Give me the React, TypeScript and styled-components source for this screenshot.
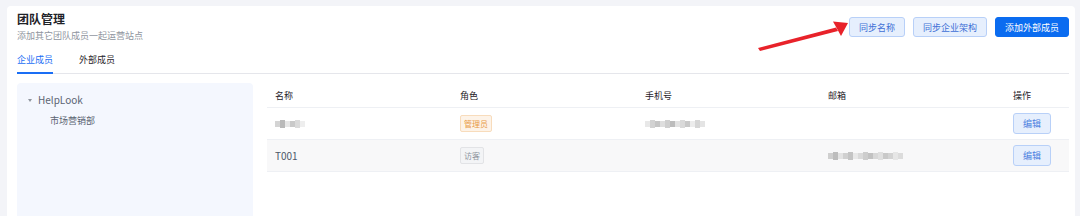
import React from 'react';
import styled, { createGlobalStyle } from 'styled-components';

const GlobalStyle = createGlobalStyle`
    html, body {
        margin: 0;
        padding: 0;
        background: #f3f4f8;
        font-family: "Noto Sans CJK SC", "Noto Sans", sans-serif;
    }
`;

const members = [
    { name: null, role: 'admin', phone: true, email: false },
    { name: 'T001', role: 'guest', phone: false, email: true },
];

const blurShades = {
    name: ['#d4d4d4', '#b9b9b9', '#e6e6e6', '#c9c9c9', '#dadada', '#eeeeee'],
    phone: ['#e8e8e8', '#d2d2d2', '#c5c5c5', '#dedede', '#cfcfcf', '#bcbcbc', '#e2e2e2', '#d9d9d9', '#c8c8c8', '#ececec', '#d6d6d6', '#e4e4e4'],
    email: ['#cfcfcf', '#bdbdbd', '#e3e3e3', '#d0d0d0', '#c4c4c4', '#e8e8e8', '#dadada', '#cdcdcd', '#c2c2c2', '#d8d8d8', '#e0e0e0', '#c9c9c9', '#d3d3d3', '#e6e6e6', '#dcdcdc'],
};

function Blurred({ shades }: { shades: string[] }) {
    return (
        <BlurRow>
            {shades.map((c, i) => (
                <BlurCell key={i} style={{ background: c, height: i % 3 === 1 ? 8 : 6 }} />
            ))}
        </BlurRow>
    );
}

function Arrow() {
    return (
        <ArrowSvg width="94" height="34" viewBox="0 0 94 34">
            <path d="M1 28 L79 7.5 L81 11 L3 31 Z" fill="#e8222a" />
            <path d="M91 3 L76 1.5 L84 16 Z" fill="#e8222a" />
        </ArrowSvg>
    );
}

export default function App() {
    return (
        <>
            <GlobalStyle />
            <Page>
                <Card>
                    <Header>
                        <div>
                            <Title>团队管理</Title>
                            <Subtitle>添加其它团队成员一起运营站点</Subtitle>
                        </div>
                        <Actions>
                            <Arrow />
                            <Button>同步名称</Button>
                            <Button>同步企业架构</Button>
                            <Button $primary>添加外部成员</Button>
                        </Actions>
                    </Header>
                    <Tabs>
                        <Tab $active>企业成员</Tab>
                        <Tab>外部成员</Tab>
                    </Tabs>
                    <Body>
                        <Tree>
                            <TreeRoot>
                                <Caret />
                                HelpLook
                            </TreeRoot>
                            <TreeChild>市场营销部</TreeChild>
                        </Tree>
                        <Table>
                            <HeadRow>
                                <Cell>名称</Cell>
                                <Cell>角色</Cell>
                                <Cell>手机号</Cell>
                                <Cell>邮箱</Cell>
                                <Cell>操作</Cell>
                            </HeadRow>
                            {members.map((m, i) => (
                                <Row key={i} $striped={i % 2 === 1}>
                                    <Cell>{m.name ?? <Blurred shades={blurShades.name} />}</Cell>
                                    <Cell>
                                        {m.role === 'admin' ? <Tag $kind="admin">管理员</Tag> : <Tag $kind="guest">访客</Tag>}
                                    </Cell>
                                    <Cell>{m.phone && <Blurred shades={blurShades.phone} />}</Cell>
                                    <Cell>{m.email && <Blurred shades={blurShades.email} />}</Cell>
                                    <Cell>
                                        <EditButton>编辑</EditButton>
                                    </Cell>
                                </Row>
                            ))}
                        </Table>
                    </Body>
                </Card>
            </Page>
        </>
    );
}

const Page = styled.div`
    width: 1080px;
    height: 216px;
    padding: 6px 5px 0 7px;
    box-sizing: border-box;
    overflow: hidden;
`;

const Card = styled.div`
    background: #ffffff;
    border-radius: 4px;
    padding: 5px 6px 0 10px;
    height: 230px;
    box-sizing: border-box;
`;

const Header = styled.div`
    display: flex;
    justify-content: space-between;
    align-items: flex-start;
`;

const Title = styled.div`
    font-size: 12px;
    line-height: 16px;
    font-weight: 700;
    color: #1f2329;
`;

const Subtitle = styled.div`
    font-size: 9px;
    line-height: 12px;
    margin-top: 3px;
    color: #8f959e;
`;

const Actions = styled.div`
    position: relative;
    display: flex;
    gap: 8px;
    margin-top: 6px;
`;

const ArrowSvg = styled.svg`
    position: absolute;
    left: -92px;
    top: 3px;
`;

const Button = styled.div<{ $primary?: boolean }>`
    height: 20px;
    box-sizing: border-box;
    padding: 0 9px;
    display: flex;
    align-items: center;
    font-size: 9px;
    border-radius: 3px;
    border: 1px solid ${(p) => (p.$primary ? '#0b6cf0' : '#b8d0f8')};
    background: ${(p) => (p.$primary ? '#0b6cf0' : '#e6effd')};
    color: ${(p) => (p.$primary ? '#ffffff' : '#3f6fd6')};
`;

const Tabs = styled.div`
    display: flex;
    gap: 26px;
    margin-top: 12px;
    border-bottom: 1px solid #e5e6eb;
`;

const Tab = styled.div<{ $active?: boolean }>`
    font-size: 9px;
    line-height: 12px;
    padding-bottom: 6px;
    margin-bottom: -1px;
    color: ${(p) => (p.$active ? '#1a6ef5' : '#1f2329')};
    border-bottom: 2px solid ${(p) => (p.$active ? '#1a6ef5' : 'transparent')};
`;

const Body = styled.div`
    display: flex;
    gap: 14px;
    margin-top: 9px;
`;

const Tree = styled.div`
    width: 236px;
    height: 140px;
    flex-shrink: 0;
    background: #f4f7fe;
    border-radius: 4px;
    padding: 10px 0 0 11px;
    box-sizing: border-box;
`;

const TreeRoot = styled.div`
    display: flex;
    align-items: center;
    gap: 6px;
    font-size: 10px;
    line-height: 14px;
    color: #5b6472;
`;

const Caret = styled.span`
    width: 0;
    height: 0;
    border-left: 2.5px solid transparent;
    border-right: 2.5px solid transparent;
    border-top: 3px solid #8f959e;
`;

const TreeChild = styled.div`
    margin: 8px 0 0 22px;
    font-size: 9px;
    line-height: 12px;
    color: #5b6472;
`;

const Table = styled.div`
    flex: 1;
`;

const columns = '185px 185px 183px 185px 1fr';

const HeadRow = styled.div`
    display: grid;
    grid-template-columns: ${columns};
    height: 25px;
    align-items: center;
    border-bottom: 1px solid #eef0f4;
    font-size: 9px;
    color: #1f2329;
    box-sizing: border-box;
`;

const Row = styled.div<{ $striped?: boolean }>`
    display: grid;
    grid-template-columns: ${columns};
    height: 32px;
    align-items: center;
    border-bottom: 1px solid #eef0f4;
    background: ${(p) => (p.$striped ? '#f8f8f9' : '#ffffff')};
    font-size: 10px;
    color: #4e5969;
    box-sizing: border-box;
`;

const Cell = styled.div`
    padding-left: 8px;
    display: flex;
    align-items: center;
`;

const BlurRow = styled.div`
    display: flex;
    align-items: center;
    filter: blur(0.6px);
`;

const BlurCell = styled.span`
    width: 5px;
`;

const Tag = styled.span<{ $kind: 'admin' | 'guest' }>`
    font-size: 8px;
    line-height: 15px;
    padding: 0 3px;
    border-radius: 2px;
    border: 1px solid ${(p) => (p.$kind === 'admin' ? '#f8dcbc' : '#e2e3e6')};
    background: ${(p) => (p.$kind === 'admin' ? '#fdf3e8' : '#f3f4f6')};
    color: ${(p) => (p.$kind === 'admin' ? '#e89a45' : '#8f959e')};
`;

const EditButton = styled.div`
    width: 38px;
    height: 21px;
    box-sizing: border-box;
    display: flex;
    align-items: center;
    justify-content: center;
    font-size: 9px;
    border-radius: 3px;
    border: 1px solid #b8d0f8;
    background: #e6effd;
    color: #4a7fe0;
`;
